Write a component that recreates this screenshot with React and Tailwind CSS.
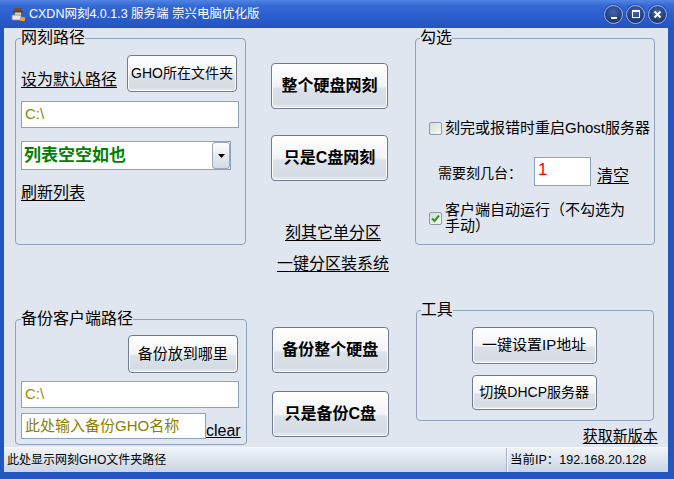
import React from "react";

const FONT = "font-['Liberation_Sans','Noto_Sans_CJK_SC',sans-serif]";

function Btn({ className = "", children }) {
  return (
    <button
      className={`flex shrink-0 items-center justify-center whitespace-nowrap rounded-[4px] border border-[#6f7b8a] bg-[linear-gradient(to_bottom,#ffffff_0%,#f2f4f7_50%,#dae1e8_56%,#d5dce4_90%,#e8ecf0_100%)] shadow-[inset_0_0_0_1px_#ffffff] text-black ${className}`}
    >
      {children}
    </button>
  );
}

function Check({ checked }) {
  return (
    <span className="flex h-[13px] w-[13px] shrink-0 items-center justify-center rounded-[2px] border border-[#8c9aa6] bg-[linear-gradient(135deg,#d6dcd6,#f7f8f5)]">
      {checked && (
        <svg width="9" height="9" viewBox="0 0 9 9">
          <path d="M1 4.5 L3.5 7 L8 1.5" stroke="#1f9e1f" strokeWidth="2" fill="none" />
        </svg>
      )}
    </span>
  );
}

function TitleIcon() {
  return (
    <svg width="15" height="15" viewBox="0 0 15 15">
      <rect x="3" y="1" width="8" height="4" rx="1" fill="#7a4a2a" />
      <rect x="2" y="4" width="10" height="1.5" fill="#5a3a20" />
      <rect x="4" y="5.5" width="6" height="3" fill="#f0d0a8" />
      <rect x="1" y="8" width="9" height="5" rx="1" fill="#e8e8e8" stroke="#8a8a8a" strokeWidth="0.8" />
      <rect x="9" y="10" width="5" height="4" rx="1" fill="#f0a030" />
    </svg>
  );
}

function CapBtn({ children }) {
  return (
    <span className="flex h-[19px] w-[19px] items-center justify-center rounded-full border border-[#9fb4e0] bg-[radial-gradient(circle_at_50%_35%,#4266b0,#1c3574_75%)] shadow-[0_0_0_1px_#2a4fa8]">
      {children}
    </span>
  );
}

export default function App() {
  return (
    <div className={`flex h-[479px] w-[674px] flex-col bg-[#2456c2] ${FONT}`}>
      {/* title bar */}
      <div className="flex h-[28px] shrink-0 items-center bg-[linear-gradient(to_bottom,#5284e4_0%,#3569d6_20%,#2b5dcc_60%,#2554c0_100%)] pl-[11px] pr-[7px]">
        <TitleIcon />
        <span className="ml-[3px] text-[12.5px] leading-[14px] text-white">CXDN网刻4.0.1.3 服务端 崇兴电脑优化版</span>
        <div className="ml-auto flex gap-[3px]">
          <CapBtn>
            <span className="mt-[7px] h-[2px] w-[6px] bg-white" />
          </CapBtn>
          <CapBtn>
            <span className="h-[8px] w-[8px] border border-t-2 border-white" />
          </CapBtn>
          <CapBtn>
            <svg width="9" height="9" viewBox="0 0 9 9">
              <path d="M1.5 1.5 L7.5 7.5 M7.5 1.5 L1.5 7.5" stroke="#fff" strokeWidth="2" />
            </svg>
          </CapBtn>
        </div>
      </div>

      {/* frame */}
      <div className="flex-1 pb-[7px] pl-[4px] pr-[6px]">
        <div className="flex h-full flex-col bg-[#dfe6f0] text-black">
          {/* row 1 */}
          <div className="flex h-[218px] shrink-0 pl-[11px]">
            <fieldset className="mt-[2px] h-[215px] w-[231px] rounded-[4px] border border-[#8fa2b9] px-[5px]">
              <legend className="text-[16px] leading-[16px]">网刻路径</legend>
              <div className="mt-[9px] flex items-end justify-between pr-[3px]">
                <span className="mb-[3px] text-[16px] leading-[18px] underline underline-offset-[2px]">设为默认路径</span>
                <Btn className="h-[37px] w-[110px] text-[14px]">GHO所在文件夹</Btn>
              </div>
              <div className="mt-[9px] flex h-[27px] w-[218px] items-center border border-[#8aa1bf] bg-white pl-[3px] text-[15px] text-[#6e9400]">
                C:\
              </div>
              <div className="mt-[13px] flex h-[29px] w-[210px] items-center justify-between border border-[#8aa1bf] bg-white">
                <span className="pl-[2px] text-[17px] font-bold leading-[20px] text-[#008000]">列表空空如也</span>
                <span className="flex h-full w-[18px] items-center justify-center rounded-[3px] border border-[#9aa8b8] bg-[linear-gradient(to_bottom,#ffffff,#e4e9ef_55%,#d3dae3)]">
                  <svg width="7" height="4" viewBox="0 0 7 4">
                    <path d="M0 0 H7 L3.5 4 Z" fill="#000" />
                  </svg>
                </span>
              </div>
              <div className="mt-[14px] text-[16px] leading-[18px] underline underline-offset-[2px]">刷新列表</div>
            </fieldset>

            <div className="ml-[25px] flex w-[117px] flex-col items-start">
              <Btn className="mt-[35px] h-[46px] w-full text-[16px] font-bold">整个硬盘网刻</Btn>
              <Btn className="mt-[26px] h-[46px] w-full text-[16px] font-bold">只是C盘网刻</Btn>
              <span className="ml-[14px] mt-[43px] shrink-0 whitespace-nowrap text-[16px] leading-[18px] underline underline-offset-[2px]">刻其它单分区</span>
              <span className="ml-[6px] mt-[13px] shrink-0 whitespace-nowrap text-[16px] leading-[18px] underline underline-offset-[2px]">一键分区装系统</span>
            </div>

            <fieldset className="ml-[27px] mt-[2px] h-[215px] w-[238px] rounded-[4px] border border-[#8fa2b9] px-[4px]">
              <legend className="text-[16px] leading-[16px]">勾选</legend>
              <div className="ml-[9px] mt-[73px] flex h-[18px] items-center">
                <Check />
                <span className="ml-[3px] whitespace-nowrap text-[15px] leading-[18px]">刻完或报错时重启Ghost服务器</span>
              </div>
              <div className="ml-[18px] mt-[20px] flex items-end">
                <span className="mb-[5px] text-[14px] leading-[16px]">需要刻几台：</span>
                <span className="ml-[12px] flex h-[29px] w-[57px] items-start border border-[#8aa1bf] bg-white pl-[3px] pt-[3px] text-[17px] leading-[18px] text-[#ff0000]">
                  1
                </span>
                <span className="mb-[1px] ml-[6px] text-[16px] leading-[18px] underline underline-offset-[2px]">清空</span>
              </div>
              <div className="ml-[9px] mt-[16px] flex items-center">
                <Check checked />
                <span className="ml-[3px] w-[190px] text-[15px] leading-[16px]">客户端自动运行（不勾选为手动）</span>
              </div>
            </fieldset>
          </div>

          {/* row 2 */}
          <div className="flex h-[201px] shrink-0 pl-[11px]">
            <fieldset className="mt-[65px] h-[134px] w-[231px] rounded-[4px] border border-[#8fa2b9] px-[5px]">
              <legend className="text-[16px] leading-[16px]">备份客户端路径</legend>
              <div className="mt-[8px] flex justify-end pr-[3px]">
                <Btn className="h-[38px] w-[110px] text-[15px]">备份放到哪里</Btn>
              </div>
              <div className="mt-[8px] flex h-[27px] w-[218px] items-center border border-[#8aa1bf] bg-white pl-[3px] text-[15px] text-[#9a8c00]">
                C:\
              </div>
              <div className="mt-[5px] flex items-end">
                <div className="flex h-[26px] w-[185px] items-center border border-[#8aa1bf] bg-white pl-[3px] text-[15px] text-[#8a8000]">
                  此处输入备份GHO名称
                </div>
                <span className="text-[16px] leading-[17px] underline underline-offset-[1px]">clear</span>
              </div>
            </fieldset>

            <div className="ml-[25px] flex w-[117px] flex-col">
              <Btn className="mt-[81px] h-[46px] w-full text-[16px] font-bold">备份整个硬盘</Btn>
              <Btn className="mt-[18px] h-[46px] w-full text-[16px] font-bold">只是备份C盘</Btn>
            </div>

            <div className="ml-[27px] flex w-[238px] flex-col">
              <fieldset className="mt-[56px] h-[119px] w-[238px] shrink-0 rounded-[4px] border border-[#8fa2b9] px-[4px]">
                <legend className="text-[16px] leading-[16px]">工具</legend>
                <Btn className="ml-[51px] mt-[9px] h-[37px] w-[125px] text-[15px]">一键设置IP地址</Btn>
                <Btn className="ml-[51px] mt-[11px] h-[35px] w-[125px] text-[14px]">切换DHCP服务器</Btn>
              </fieldset>
              <span className="-mr-[4px] mt-[7px] shrink-0 self-end text-[15px] leading-[16px] underline underline-offset-[2px]">获取新版本</span>
            </div>
          </div>

          {/* status bar */}
          <div className="flex h-[25px] shrink-0 items-center border-t border-[#f7f9fc] bg-[linear-gradient(to_bottom,#f1f4f8,#dce4ee_50%,#c9d5e3)]">
            <div className="w-[502px] pl-[3px] text-[12px] leading-[14px]">此处显示网刻GHO文件夹路径</div>
            <div className="h-full w-[2px] border-l border-r border-l-[#aab7c8] border-r-[#f5f8fb]" />
            <div className="pl-[2px] text-[12.5px] leading-[14px]">当前IP：192.168.20.128</div>
          </div>
        </div>
      </div>
    </div>
  );
}
